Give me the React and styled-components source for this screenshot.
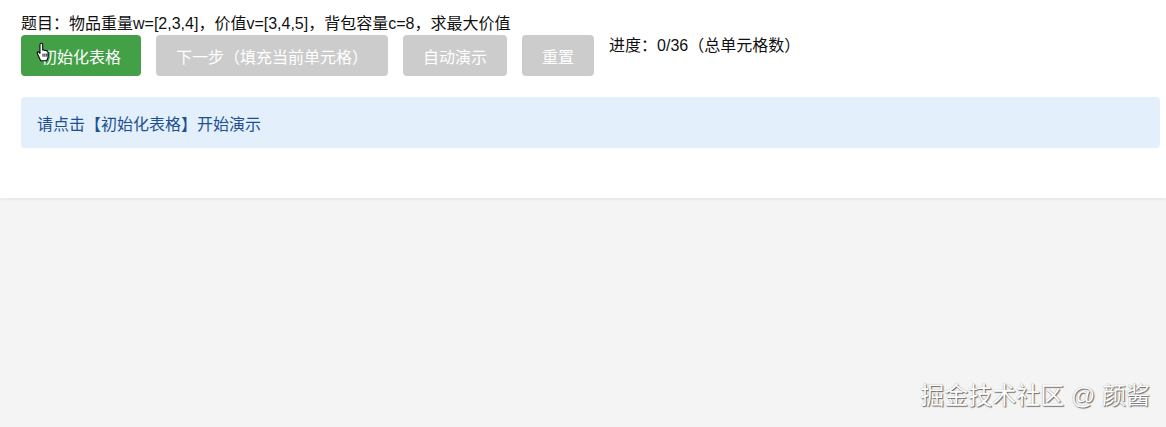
import React from 'react'
import styled, { createGlobalStyle } from 'styled-components'

const GlobalStyle = createGlobalStyle`
  html, body {
    margin: 0;
    padding: 0;
    background: #f4f4f4;
    font-family: "Liberation Sans", "Noto Sans CJK SC", sans-serif;
  }
`

const Page = styled.div`
  position: relative;
  width: 1166px;
  height: 427px;
  background: #f4f4f4;
  overflow: hidden;
`

const Panel = styled.div`
  background: #fff;
  padding: 13px 6px 50px 21px;
  box-shadow: 0 1px 4px rgba(0, 0, 0, 0.08);
`

const Title = styled.div`
  font-size: 16px;
  line-height: 22px;
  color: #111;
`

const Toolbar = styled.div`
  display: flex;
  align-items: flex-start;
  gap: 15px;
`

const Button = styled.button`
  position: relative;
  height: 41px;
  padding: 0 20px;
  border: none;
  border-radius: 4px;
  font-family: inherit;
  font-size: 16px;
  color: #fff;
  background: ${p => (p.primary ? '#43a047' : '#cccccc')};
  cursor: pointer;
`

const Progress = styled.span`
  font-size: 16px;
  line-height: 22px;
  color: #111;
`

const Notice = styled.div`
  margin-top: 21px;
  height: 51px;
  display: flex;
  align-items: center;
  padding: 0 16px;
  background: #e3effb;
  border-radius: 4px;
  color: #1d4f91;
  font-size: 16px;
`

const Cursor = styled.svg`
  position: absolute;
  left: 15px;
  top: 7px;
`

const Watermark = styled.div`
  position: absolute;
  right: 16px;
  bottom: 16px;
  font-size: 24px;
  color: #fff;
  text-shadow: 1px 1px 1px rgba(0, 0, 0, 0.55), 0 0 1px rgba(0, 0, 0, 0.4);
`

const HandCursor = () => (
  <Cursor width="17" height="20" viewBox="0 0 16 19">
    <path
      d="M5 1.2c.8 0 1.3.5 1.3 1.3v5.2l.4-.1c.6-.3 1.3 0 1.5.5.5-.4 1.3-.2 1.6.4.6-.3 1.3 0 1.5.7l.2 4.4c0 1.7-.6 3-1.6 4.3H4.4L1.2 11c-.5-.8-.1-1.6.7-1.6.5 0 .9.3 1.3.7l.5.7V2.5c0-.8.5-1.3 1.3-1.3z"
      fill="#fff"
      stroke="#000"
      strokeWidth="1"
      strokeLinejoin="round"
    />
    <path d="M6.6 11v3M8.4 11v3M10.2 11v3" stroke="#000" strokeWidth="0.9" />
  </Cursor>
)

const App = () => {
  return (
    <Page>
      <GlobalStyle />
      <Panel>
        <Title>题目：物品重量w=[2,3,4]，价值v=[3,4,5]，背包容量c=8，求最大价值</Title>
        <Toolbar>
          <Button primary>
            初始化表格
            <HandCursor />
          </Button>
          <Button>下一步（填充当前单元格）</Button>
          <Button>自动演示</Button>
          <Button>重置</Button>
          <Progress>进度：0/36（总单元格数）</Progress>
        </Toolbar>
        <Notice>请点击【初始化表格】开始演示</Notice>
      </Panel>
      <Watermark>掘金技术社区 @ 颜酱</Watermark>
    </Page>
  )
}

export default App
